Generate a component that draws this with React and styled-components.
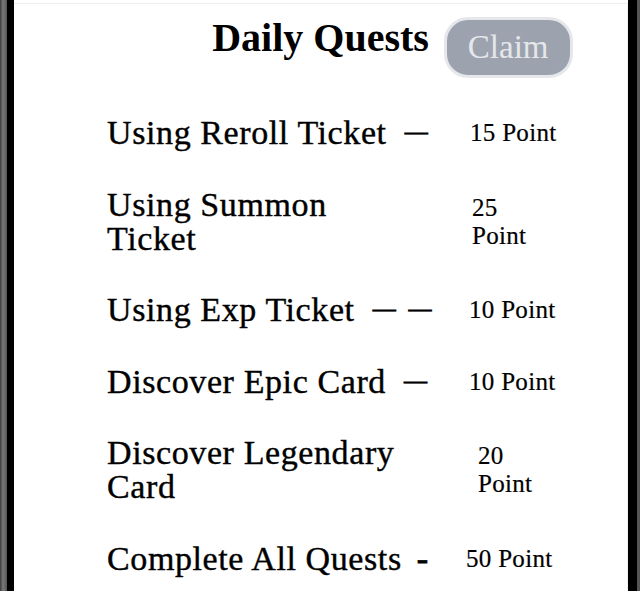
import React from 'react';
import styled, { createGlobalStyle } from 'styled-components';

const GlobalStyle = createGlobalStyle`
  html, body {
    margin: 0;
    padding: 0;
    background: linear-gradient(90deg, #3c3c3c 0px, #7a7a7a 3px, #555 7px);
    font-family: "Liberation Serif", "Times New Roman", serif;
    overflow: hidden;
  }
`;

const PhoneFrame = styled.div`
  box-sizing: border-box;
  width: 630px;
  min-height: 100vh;
  margin-left: 7px;
  padding-top: 3px;
  border-left: 7px solid #000;
  border-right: 9px solid #000;
  background: #fff;
`;

const Screen = styled.div`
  box-sizing: border-box;
  padding-top: 10px;
  border-top: 1px solid #eeeeee;
  border-right: 1px solid #f0f0f0;
  min-height: calc(100vh - 3px);
`;

const Header = styled.div`
  display: grid;
  grid-template-columns: 1fr auto 1fr;
  align-items: start;
`;

const Title = styled.h1`
  grid-column: 2;
  margin: 0;
  font-size: 40px;
  line-height: 48px;
  font-weight: bold;
  color: #000;
`;

const ClaimButton = styled.button`
  grid-column: 3;
  justify-self: start;
  margin: 3px 0 0 15px;
  height: 61px;
  padding: 0 21px;
  border: 3px solid #e5e7eb;
  border-radius: 24px;
  background: #9ca3af;
  color: #e5e7eb;
  font-family: inherit;
  font-size: 33px;
  line-height: 55px;
  cursor: pointer;
`;

const QuestList = styled.ul`
  list-style: none;
  margin: 38px 0 0;
  padding: 0 0 0 93px;
  display: flex;
  flex-direction: column;
  gap: 37.5px;
`;

const QuestRow = styled.li`
  display: flex;
  align-items: center;
`;

const QuestName = styled.span`
  flex: 0 0 ${(p) => (p.$narrow ? '300px' : '340px')};
  margin-right: ${(p) => (p.$narrow ? '40px' : '0')};
  font-size: 34px;
  line-height: 34px;
  color: #000;
  letter-spacing: 0.6px;
  -webkit-text-stroke: 0.4px #000;
`;

const Dash = styled.span`
  display: inline-block;
  font-size: ${(p) => (p.$hyphen ? '34px' : '23px')};
  line-height: 0;
  letter-spacing: ${(p) => (p.$hyphen ? '0' : '-1px')};
  word-spacing: 9px;
  margin-left: ${(p) => (p.$hyphen ? '15px' : '18px')};
  vertical-align: ${(p) => (p.$hyphen ? '0' : '5px')};
  -webkit-text-stroke: 0.8px #000;
`;

const QuestPoints = styled.span`
  margin-left: ${(p) => 23 + (p.$shift || 0)}px;
  max-width: ${(p) => (p.$narrow ? '70px' : 'none')};
  font-size: 25px;
  line-height: 28px;
  letter-spacing: 0.3px;
  color: #000;
  -webkit-text-stroke: 0.2px #000;
`;

const quests = [
  { name: 'Using Reroll Ticket', dash: '\u2014', points: '15 Point' },
  { name: 'Using Summon Ticket', points: '25 Point', narrow: true, shift: 2 },
  { name: 'Using Exp Ticket', dash: '\u2014 \u2014', points: '10 Point', shift: -1 },
  { name: 'Discover Epic Card', dash: '\u2014', points: '10 Point', shift: -1 },
  { name: 'Discover Legendary Card', points: '20 Point', narrow: true, shift: 8 },
  { name: 'Complete All Quests', dash: '-', hyphen: true, points: '50 Point', shift: -4 },
];

function App() {
  return (
    <>
      <GlobalStyle />
      <PhoneFrame>
        <Screen>
          <Header>
            <Title>Daily Quests</Title>
            <ClaimButton>Claim</ClaimButton>
          </Header>
          <QuestList>
            {quests.map((q) => (
              <QuestRow key={q.name}>
                <QuestName $narrow={q.narrow}>
                  {q.name}
                  {q.dash && <Dash $hyphen={q.hyphen}>{q.dash}</Dash>}
                </QuestName>
                <QuestPoints $narrow={q.narrow} $shift={q.shift}>
                  {q.points}
                </QuestPoints>
              </QuestRow>
            ))}
          </QuestList>
        </Screen>
      </PhoneFrame>
    </>
  );
}

export default App;
